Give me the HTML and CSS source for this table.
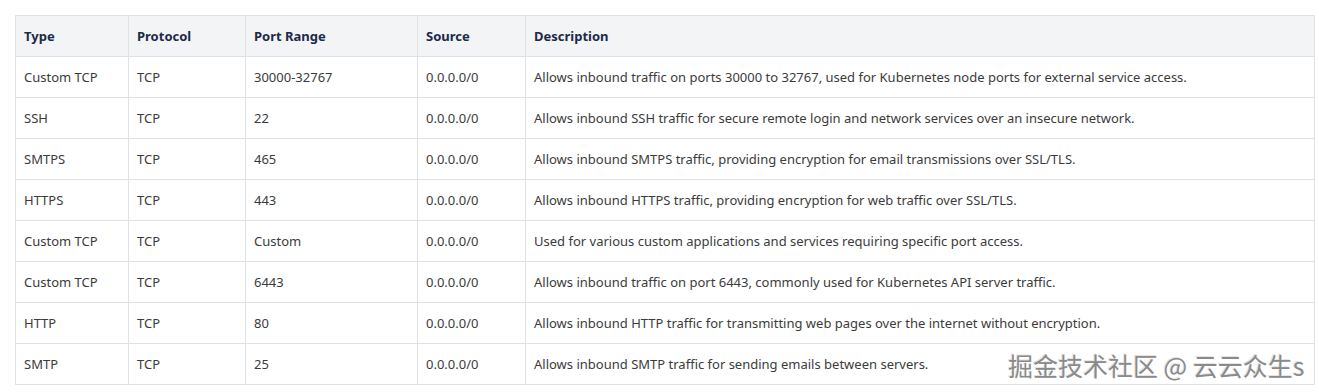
FILE: index.html
```html
<!DOCTYPE html>
<html>
<head>
<meta charset="utf-8">
<link rel="stylesheet" href="styles.css">
</head>
<body>
<div class="wrap">
<table class="rules">
  <colgroup>
    <col class="c-type"><col class="c-proto"><col class="c-port"><col class="c-src"><col class="c-desc">
  </colgroup>
  <thead>
    <tr><th>Type</th><th>Protocol</th><th>Port Range</th><th>Source</th><th>Description</th></tr>
  </thead>
  <tbody>
    <tr><td>Custom TCP</td><td>TCP</td><td>30000-32767</td><td>0.0.0.0/0</td><td>Allows inbound traffic on ports 30000 to 32767, used for Kubernetes node ports for external service access.</td></tr>
    <tr><td>SSH</td><td>TCP</td><td>22</td><td>0.0.0.0/0</td><td>Allows inbound SSH traffic for secure remote login and network services over an insecure network.</td></tr>
    <tr><td>SMTPS</td><td>TCP</td><td>465</td><td>0.0.0.0/0</td><td>Allows inbound SMTPS traffic, providing encryption for email transmissions over SSL/TLS.</td></tr>
    <tr><td>HTTPS</td><td>TCP</td><td>443</td><td>0.0.0.0/0</td><td>Allows inbound HTTPS traffic, providing encryption for web traffic over SSL/TLS.</td></tr>
    <tr><td>Custom TCP</td><td>TCP</td><td>Custom</td><td>0.0.0.0/0</td><td>Used for various custom applications and services requiring specific port access.</td></tr>
    <tr><td>Custom TCP</td><td>TCP</td><td>6443</td><td>0.0.0.0/0</td><td>Allows inbound traffic on port 6443, commonly used for Kubernetes API server traffic.</td></tr>
    <tr><td>HTTP</td><td>TCP</td><td>80</td><td>0.0.0.0/0</td><td>Allows inbound HTTP traffic for transmitting web pages over the internet without encryption.</td></tr>
    <tr><td>SMTP</td><td>TCP</td><td>25</td><td>0.0.0.0/0</td><td>Allows inbound SMTP traffic for sending emails between servers.</td></tr>
  </tbody>
</table>
<div class="watermark">掘金技术社区 @ 云云众生s</div>
</div>
</body>
</html>
```
FILE: styles.css
```css
html, body {
  margin: 0;
  padding: 0;
  background: #ffffff;
}
.wrap {
  position: relative;
  padding: 15px 0 0 15px;
}
.rules {
  border-collapse: collapse;
  table-layout: fixed;
  width: 1300px;
  font-family: "Noto Sans", "Open Sans", sans-serif;
  font-size: 13px;
  color: #3b3b3b;
}
.c-type { width: 113px; }
.c-proto { width: 117px; }
.c-port { width: 172px; }
.c-src { width: 108px; }
.rules th, .rules td {
  border: 1px solid #dfe1e4;
  height: 41px;
  padding: 0 8px;
  text-align: left;
  vertical-align: middle;
  white-space: nowrap;
  box-sizing: border-box;
}
.rules th {
  background: #f3f4f6;
  color: #1b2a47;
  font-weight: 700;
}
.watermark {
  position: absolute;
  left: 1008px;
  top: 348px;
  font-family: "Noto Sans CJK SC", "Noto Sans", sans-serif;
  font-size: 25px;
  line-height: 34px;
  color: #8a8a8a;
  text-shadow: 1px 1px 0 #ffffff, -1px -1px 0 #e4e4e4;
  white-space: nowrap;
}
```
